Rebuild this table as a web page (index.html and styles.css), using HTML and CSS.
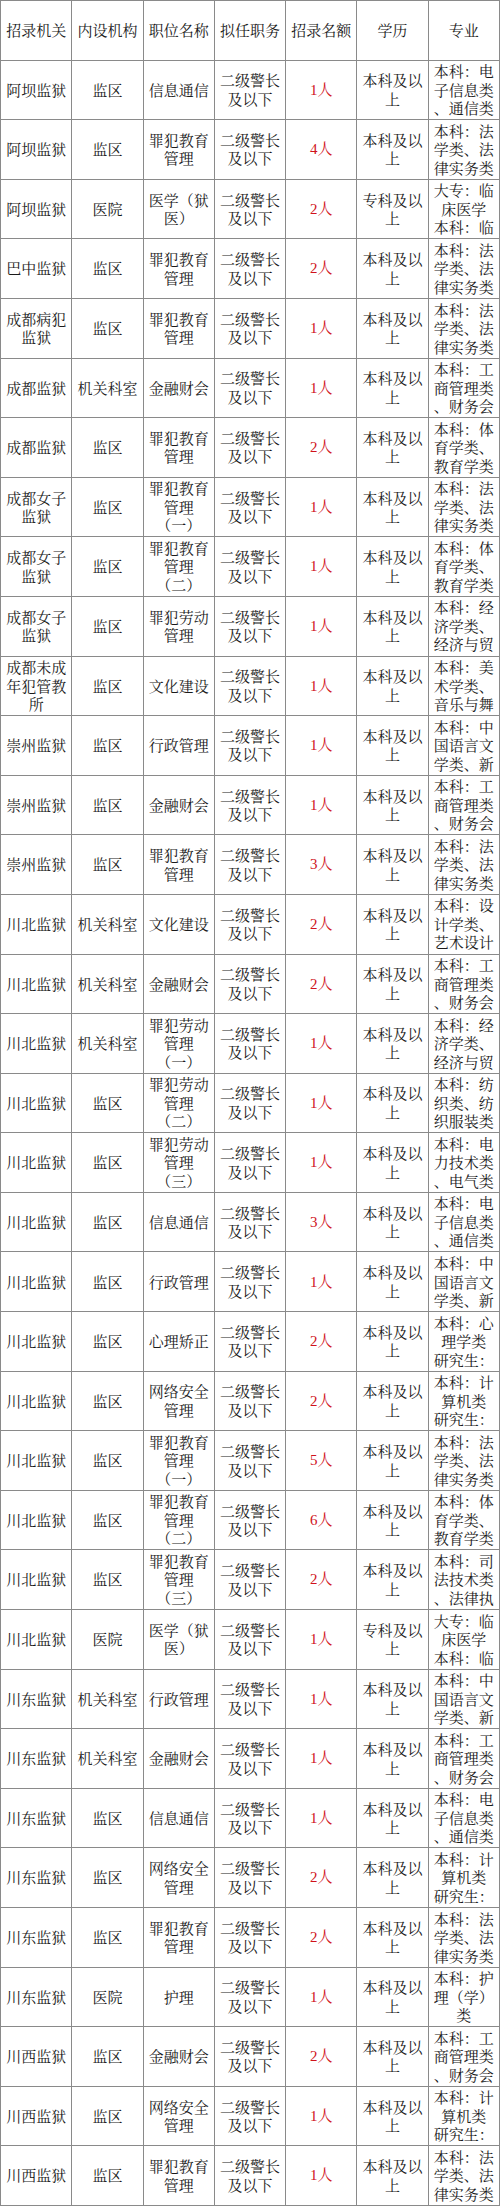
FILE: index.html
```html
<!DOCTYPE html>
<html lang="zh-CN">
<head>
<meta charset="utf-8">
<title>招录职位表</title>
<link rel="stylesheet" href="styles.css">
</head>
<body>
<table class="jobs">
<colgroup><col><col><col><col><col><col><col></colgroup>
<thead>
<tr><th><div class="c">招录机关</div></th><th><div class="c">内设机构</div></th><th><div class="c">职位名称</div></th><th><div class="c">拟任职务</div></th><th><div class="c">招录名额</div></th><th><div class="c">学历</div></th><th><div class="c">专业</div></th></tr>
</thead>
<tbody>
<tr><td><div class="c">阿坝监狱</div></td><td><div class="c">监区</div></td><td><div class="c">信息通信</div></td><td><div class="c">二级警长及以下</div></td><td><div class="c num">1人</div></td><td><div class="c">本科及以上</div></td><td><div class="c major">本科：电子信息类、通信类</div></td></tr>
<tr><td><div class="c">阿坝监狱</div></td><td><div class="c">监区</div></td><td><div class="c">罪犯教育管理</div></td><td><div class="c">二级警长及以下</div></td><td><div class="c num">4人</div></td><td><div class="c">本科及以上</div></td><td><div class="c major">本科：法学类、法律实务类</div></td></tr>
<tr><td><div class="c">阿坝监狱</div></td><td><div class="c">医院</div></td><td><div class="c">医学（狱医）</div></td><td><div class="c">二级警长及以下</div></td><td><div class="c num">2人</div></td><td><div class="c">专科及以上</div></td><td><div class="c major">大专：临床医学<br>本科：临</div></td></tr>
<tr><td><div class="c">巴中监狱</div></td><td><div class="c">监区</div></td><td><div class="c">罪犯教育管理</div></td><td><div class="c">二级警长及以下</div></td><td><div class="c num">2人</div></td><td><div class="c">本科及以上</div></td><td><div class="c major">本科：法学类、法律实务类</div></td></tr>
<tr><td><div class="c">成都病犯监狱</div></td><td><div class="c">监区</div></td><td><div class="c">罪犯教育管理</div></td><td><div class="c">二级警长及以下</div></td><td><div class="c num">1人</div></td><td><div class="c">本科及以上</div></td><td><div class="c major">本科：法学类、法律实务类</div></td></tr>
<tr><td><div class="c">成都监狱</div></td><td><div class="c">机关科室</div></td><td><div class="c">金融财会</div></td><td><div class="c">二级警长及以下</div></td><td><div class="c num">1人</div></td><td><div class="c">本科及以上</div></td><td><div class="c major">本科：工商管理类、财务会</div></td></tr>
<tr><td><div class="c">成都监狱</div></td><td><div class="c">监区</div></td><td><div class="c">罪犯教育管理</div></td><td><div class="c">二级警长及以下</div></td><td><div class="c num">2人</div></td><td><div class="c">本科及以上</div></td><td><div class="c major">本科：体育学类、教育学类</div></td></tr>
<tr><td><div class="c">成都女子监狱</div></td><td><div class="c">监区</div></td><td><div class="c">罪犯教育管理（一）</div></td><td><div class="c">二级警长及以下</div></td><td><div class="c num">1人</div></td><td><div class="c">本科及以上</div></td><td><div class="c major">本科：法学类、法律实务类</div></td></tr>
<tr><td><div class="c">成都女子监狱</div></td><td><div class="c">监区</div></td><td><div class="c">罪犯教育管理（二）</div></td><td><div class="c">二级警长及以下</div></td><td><div class="c num">1人</div></td><td><div class="c">本科及以上</div></td><td><div class="c major">本科：体育学类、教育学类</div></td></tr>
<tr><td><div class="c">成都女子监狱</div></td><td><div class="c">监区</div></td><td><div class="c">罪犯劳动管理</div></td><td><div class="c">二级警长及以下</div></td><td><div class="c num">1人</div></td><td><div class="c">本科及以上</div></td><td><div class="c major">本科：经济学类、经济与贸</div></td></tr>
<tr><td><div class="c">成都未成年犯管教所</div></td><td><div class="c">监区</div></td><td><div class="c">文化建设</div></td><td><div class="c">二级警长及以下</div></td><td><div class="c num">1人</div></td><td><div class="c">本科及以上</div></td><td><div class="c major">本科：美术学类、音乐与舞</div></td></tr>
<tr><td><div class="c">崇州监狱</div></td><td><div class="c">监区</div></td><td><div class="c">行政管理</div></td><td><div class="c">二级警长及以下</div></td><td><div class="c num">1人</div></td><td><div class="c">本科及以上</div></td><td><div class="c major">本科：中国语言文学类、新</div></td></tr>
<tr><td><div class="c">崇州监狱</div></td><td><div class="c">监区</div></td><td><div class="c">金融财会</div></td><td><div class="c">二级警长及以下</div></td><td><div class="c num">1人</div></td><td><div class="c">本科及以上</div></td><td><div class="c major">本科：工商管理类、财务会</div></td></tr>
<tr><td><div class="c">崇州监狱</div></td><td><div class="c">监区</div></td><td><div class="c">罪犯教育管理</div></td><td><div class="c">二级警长及以下</div></td><td><div class="c num">3人</div></td><td><div class="c">本科及以上</div></td><td><div class="c major">本科：法学类、法律实务类</div></td></tr>
<tr><td><div class="c">川北监狱</div></td><td><div class="c">机关科室</div></td><td><div class="c">文化建设</div></td><td><div class="c">二级警长及以下</div></td><td><div class="c num">2人</div></td><td><div class="c">本科及以上</div></td><td><div class="c major">本科：设计学类、艺术设计</div></td></tr>
<tr><td><div class="c">川北监狱</div></td><td><div class="c">机关科室</div></td><td><div class="c">金融财会</div></td><td><div class="c">二级警长及以下</div></td><td><div class="c num">2人</div></td><td><div class="c">本科及以上</div></td><td><div class="c major">本科：工商管理类、财务会</div></td></tr>
<tr><td><div class="c">川北监狱</div></td><td><div class="c">机关科室</div></td><td><div class="c">罪犯劳动管理（一）</div></td><td><div class="c">二级警长及以下</div></td><td><div class="c num">1人</div></td><td><div class="c">本科及以上</div></td><td><div class="c major">本科：经济学类、经济与贸</div></td></tr>
<tr><td><div class="c">川北监狱</div></td><td><div class="c">监区</div></td><td><div class="c">罪犯劳动管理（二）</div></td><td><div class="c">二级警长及以下</div></td><td><div class="c num">1人</div></td><td><div class="c">本科及以上</div></td><td><div class="c major">本科：纺织类、纺织服装类</div></td></tr>
<tr><td><div class="c">川北监狱</div></td><td><div class="c">监区</div></td><td><div class="c">罪犯劳动管理（三）</div></td><td><div class="c">二级警长及以下</div></td><td><div class="c num">1人</div></td><td><div class="c">本科及以上</div></td><td><div class="c major">本科：电力技术类、电气类</div></td></tr>
<tr><td><div class="c">川北监狱</div></td><td><div class="c">监区</div></td><td><div class="c">信息通信</div></td><td><div class="c">二级警长及以下</div></td><td><div class="c num">3人</div></td><td><div class="c">本科及以上</div></td><td><div class="c major">本科：电子信息类、通信类</div></td></tr>
<tr><td><div class="c">川北监狱</div></td><td><div class="c">监区</div></td><td><div class="c">行政管理</div></td><td><div class="c">二级警长及以下</div></td><td><div class="c num">1人</div></td><td><div class="c">本科及以上</div></td><td><div class="c major">本科：中国语言文学类、新</div></td></tr>
<tr><td><div class="c">川北监狱</div></td><td><div class="c">监区</div></td><td><div class="c">心理矫正</div></td><td><div class="c">二级警长及以下</div></td><td><div class="c num">2人</div></td><td><div class="c">本科及以上</div></td><td><div class="c major">本科：心理学类<br>研究生：</div></td></tr>
<tr><td><div class="c">川北监狱</div></td><td><div class="c">监区</div></td><td><div class="c">网络安全管理</div></td><td><div class="c">二级警长及以下</div></td><td><div class="c num">2人</div></td><td><div class="c">本科及以上</div></td><td><div class="c major">本科：计算机类<br>研究生：</div></td></tr>
<tr><td><div class="c">川北监狱</div></td><td><div class="c">监区</div></td><td><div class="c">罪犯教育管理（一）</div></td><td><div class="c">二级警长及以下</div></td><td><div class="c num">5人</div></td><td><div class="c">本科及以上</div></td><td><div class="c major">本科：法学类、法律实务类</div></td></tr>
<tr><td><div class="c">川北监狱</div></td><td><div class="c">监区</div></td><td><div class="c">罪犯教育管理（二）</div></td><td><div class="c">二级警长及以下</div></td><td><div class="c num">6人</div></td><td><div class="c">本科及以上</div></td><td><div class="c major">本科：体育学类、教育学类</div></td></tr>
<tr><td><div class="c">川北监狱</div></td><td><div class="c">监区</div></td><td><div class="c">罪犯教育管理（三）</div></td><td><div class="c">二级警长及以下</div></td><td><div class="c num">2人</div></td><td><div class="c">本科及以上</div></td><td><div class="c major">本科：司法技术类、法律执</div></td></tr>
<tr><td><div class="c">川北监狱</div></td><td><div class="c">医院</div></td><td><div class="c">医学（狱医）</div></td><td><div class="c">二级警长及以下</div></td><td><div class="c num">1人</div></td><td><div class="c">专科及以上</div></td><td><div class="c major">大专：临床医学<br>本科：临</div></td></tr>
<tr><td><div class="c">川东监狱</div></td><td><div class="c">机关科室</div></td><td><div class="c">行政管理</div></td><td><div class="c">二级警长及以下</div></td><td><div class="c num">1人</div></td><td><div class="c">本科及以上</div></td><td><div class="c major">本科：中国语言文学类、新</div></td></tr>
<tr><td><div class="c">川东监狱</div></td><td><div class="c">机关科室</div></td><td><div class="c">金融财会</div></td><td><div class="c">二级警长及以下</div></td><td><div class="c num">1人</div></td><td><div class="c">本科及以上</div></td><td><div class="c major">本科：工商管理类、财务会</div></td></tr>
<tr><td><div class="c">川东监狱</div></td><td><div class="c">监区</div></td><td><div class="c">信息通信</div></td><td><div class="c">二级警长及以下</div></td><td><div class="c num">1人</div></td><td><div class="c">本科及以上</div></td><td><div class="c major">本科：电子信息类、通信类</div></td></tr>
<tr><td><div class="c">川东监狱</div></td><td><div class="c">监区</div></td><td><div class="c">网络安全管理</div></td><td><div class="c">二级警长及以下</div></td><td><div class="c num">2人</div></td><td><div class="c">本科及以上</div></td><td><div class="c major">本科：计算机类<br>研究生：</div></td></tr>
<tr><td><div class="c">川东监狱</div></td><td><div class="c">监区</div></td><td><div class="c">罪犯教育管理</div></td><td><div class="c">二级警长及以下</div></td><td><div class="c num">2人</div></td><td><div class="c">本科及以上</div></td><td><div class="c major">本科：法学类、法律实务类</div></td></tr>
<tr><td><div class="c">川东监狱</div></td><td><div class="c">医院</div></td><td><div class="c">护理</div></td><td><div class="c">二级警长及以下</div></td><td><div class="c num">1人</div></td><td><div class="c">本科及以上</div></td><td><div class="c major">本科：护理（学）类</div></td></tr>
<tr><td><div class="c">川西监狱</div></td><td><div class="c">监区</div></td><td><div class="c">金融财会</div></td><td><div class="c">二级警长及以下</div></td><td><div class="c num">2人</div></td><td><div class="c">本科及以上</div></td><td><div class="c major">本科：工商管理类、财务会</div></td></tr>
<tr><td><div class="c">川西监狱</div></td><td><div class="c">监区</div></td><td><div class="c">网络安全管理</div></td><td><div class="c">二级警长及以下</div></td><td><div class="c num">1人</div></td><td><div class="c">本科及以上</div></td><td><div class="c major">本科：计算机类<br>研究生：</div></td></tr>
<tr><td><div class="c">川西监狱</div></td><td><div class="c">监区</div></td><td><div class="c">罪犯教育管理</div></td><td><div class="c">二级警长及以下</div></td><td><div class="c num">1人</div></td><td><div class="c">本科及以上</div></td><td><div class="c major">本科：法学类、法律实务类</div></td></tr>
</tbody>
</table>
</body>
</html>
```
FILE: styles.css
```css
html, body {
  margin: 0;
  padding: 0;
  background: #ffffff;
}

body {
  font-family: "Noto Serif CJK SC", "Liberation Serif", "Noto Sans CJK SC", serif;
  font-size: 15px;
  color: #1a1a1a;
}

.jobs {
  width: 500px;
  table-layout: fixed;
  border-collapse: collapse;
}

.jobs th,
.jobs td {
  border: 1px solid #8a8a8a;
  padding: 0;
  font-weight: normal;
  vertical-align: middle;
}

.c {
  height: 58.6px;
  padding: 0 5px;
  display: flex;
  align-items: safe center;
  justify-content: center;
  text-align: center;
  line-height: 18.5px;
  overflow: hidden;
  box-sizing: border-box;
}

.c.num {
  color: #d0121b;
  font-family: "Liberation Serif", "Noto Serif CJK SC", "Noto Sans CJK SC", serif;
}

.c.major {
  padding: 0 3px;
  line-break: anywhere;
}
```
